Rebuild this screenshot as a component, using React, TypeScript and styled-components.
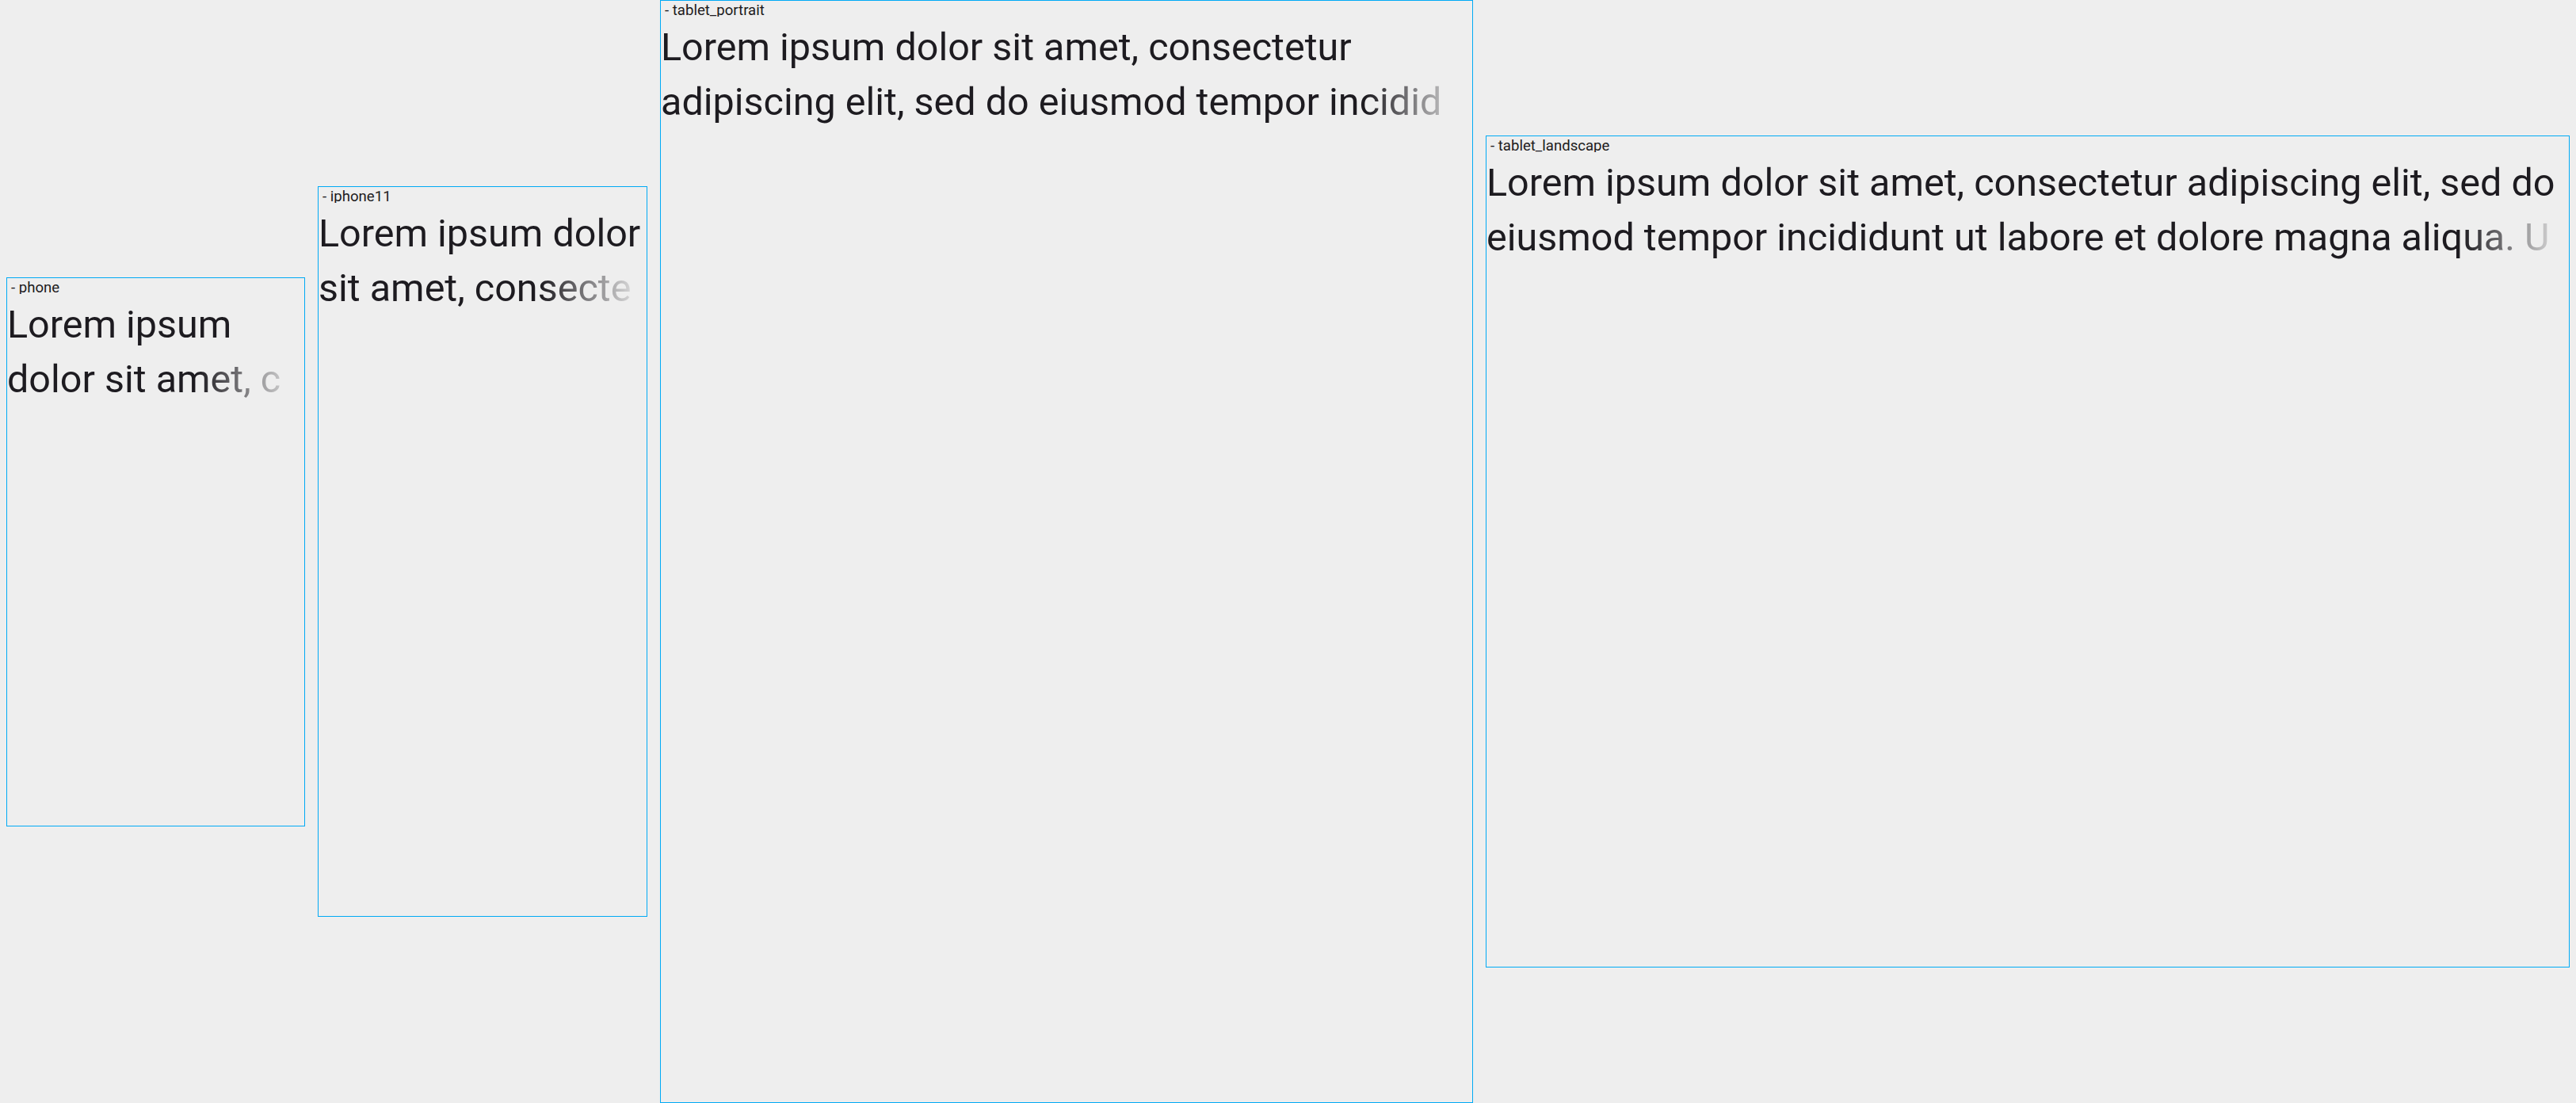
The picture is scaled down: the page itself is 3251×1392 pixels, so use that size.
import React from "react";
import styled, { createGlobalStyle } from "styled-components";

const GlobalStyle = createGlobalStyle`
  html, body {
    margin: 0;
    padding: 0;
    background: #eeeeee;
  }
  body {
    font-family: Roboto, "Noto Sans", sans-serif;
  }
`;

const Stage = styled.div`
  display: flex;
  flex-direction: row;
  align-items: center;
  gap: 16px;
  padding: 0 8px;
  height: 1392px;
  background: #eeeeee;
  box-sizing: border-box;
`;

const Frame = styled.section<{ $w: number; $h: number }>`
  flex: none;
  display: flex;
  flex-direction: column;
  width: ${(p) => p.$w + 2}px;
  height: ${(p) => p.$h + 26}px;
  border: 1px solid #00aaf5;
  box-sizing: border-box;
  overflow: hidden;
`;

const Header = styled.div`
  flex: none;
  height: 24px;
`;

const Label = styled.div`
  height: 20px;
  overflow: hidden;
  padding-left: 5px;
  font-family: Roboto, sans-serif;
  font-size: 18.6px;
  line-height: 24px;
  color: #1d1b20;
  white-space: nowrap;
`;

const Screen = styled.div`
  flex: 1;
  min-height: 0;
`;

const Paragraph = styled.p`
  margin: 0;
  font-family: Roboto, sans-serif;
  font-size: 48.5px;
  line-height: 69px;
  color: #1d1b20;
`;

const Line = styled.span<{ $fade?: boolean }>`
  display: block;
  white-space: nowrap;
  overflow: hidden;
  ${(p) =>
    p.$fade
      ? `
    -webkit-mask-image: linear-gradient(to right, #000 calc(100% - 135px), rgba(0,0,0,0.12) calc(100% - 20px));
    mask-image: linear-gradient(to right, #000 calc(100% - 135px), rgba(0,0,0,0.12) calc(100% - 20px));
  `
      : ""}
`;

type Device = {
  name: string;
  w: number;
  h: number;
  lines: [string, string];
};

const devices: Device[] = [
  { name: "phone", w: 375, h: 667, lines: ["Lorem ipsum", "dolor sit amet, c"] },
  { name: "iphone11", w: 414, h: 896, lines: ["Lorem ipsum dolor", "sit amet, consecte"] },
  {
    name: "tablet_portrait",
    w: 1024,
    h: 1366,
    lines: ["Lorem ipsum dolor sit amet, consectetur", "adipiscing elit, sed do eiusmod tempor incidid"],
  },
  {
    name: "tablet_landscape",
    w: 1366,
    h: 1024,
    lines: [
      "Lorem ipsum dolor sit amet, consectetur adipiscing elit, sed do",
      "eiusmod tempor incididunt ut labore et dolore magna aliqua. U",
    ],
  },
];

export default function App() {
  return (
    <>
      <GlobalStyle />
      <Stage>
        {devices.map((d) => (
          <Frame key={d.name} $w={d.w} $h={d.h}>
            <Header>
              <Label>- {d.name}</Label>
            </Header>
            <Screen>
              <Paragraph>
                <Line>{d.lines[0]}</Line>
                <Line $fade>{d.lines[1]}</Line>
              </Paragraph>
            </Screen>
          </Frame>
        ))}
      </Stage>
    </>
  );
}
